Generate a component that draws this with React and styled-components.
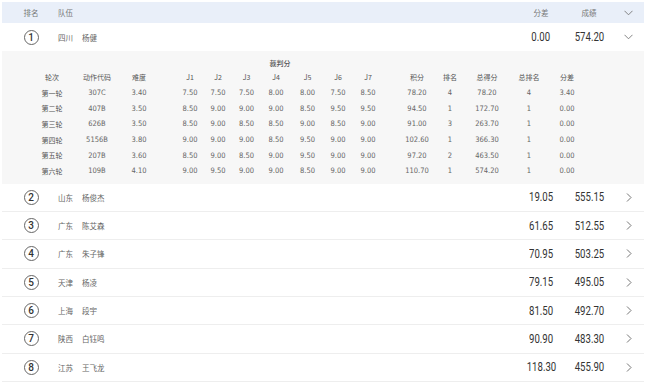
import React from "react";
import styled, { createGlobalStyle } from "styled-components";

const GlobalStyle = createGlobalStyle`
  body {
    margin: 0;
    background: #fff;
    font-family: "Noto Sans CJK SC", "Noto Sans", sans-serif;
  }
`;

const NUM_FONT = `Roboto, "DejaVu Sans Condensed", sans-serif`;

const athletes = [
  { rank: 1, prov: "四川", name: "杨健", diff: "0.00", score: "574.20", open: true },
  { rank: 2, prov: "山东", name: "杨俊杰", diff: "19.05", score: "555.15" },
  { rank: 3, prov: "广东", name: "陈艾森", diff: "61.65", score: "512.55" },
  { rank: 4, prov: "广东", name: "朱子锋", diff: "70.95", score: "503.25" },
  { rank: 5, prov: "天津", name: "杨凌", diff: "79.15", score: "495.05" },
  { rank: 6, prov: "上海", name: "段宇", diff: "81.50", score: "492.70" },
  { rank: 7, prov: "陕西", name: "白钰鸣", diff: "90.90", score: "483.30" },
  { rank: 8, prov: "江苏", name: "王飞龙", diff: "118.30", score: "455.90" },
];

const detailHead = ["轮次", "动作代码", "难度", "J1", "J2", "J3", "J4", "J5", "J6", "J7", "积分", "排名", "总得分", "总排名", "分差"];

const rounds = [
  ["第一轮", "307C", "3.40", "7.50", "7.50", "7.50", "8.00", "8.00", "7.50", "8.50", "78.20", "4", "78.20", "4", "3.40"],
  ["第二轮", "407B", "3.50", "8.50", "9.00", "9.00", "9.00", "8.50", "9.50", "9.50", "94.50", "1", "172.70", "1", "0.00"],
  ["第三轮", "626B", "3.50", "8.50", "9.00", "8.50", "8.50", "9.00", "8.50", "9.00", "91.00", "3", "263.70", "1", "0.00"],
  ["第四轮", "5156B", "3.80", "9.00", "9.00", "9.00", "8.50", "9.50", "9.00", "9.00", "102.60", "1", "366.30", "1", "0.00"],
  ["第五轮", "207B", "3.60", "8.50", "9.00", "8.50", "9.00", "9.50", "9.00", "9.00", "97.20", "2", "463.50", "1", "0.00"],
  ["第六轮", "109B", "4.10", "9.00", "9.50", "9.00", "9.00", "8.50", "9.00", "9.00", "110.70", "1", "574.20", "1", "0.00"],
];

const ChevronDown = () => (
  <svg width="9" height="6" viewBox="0 0 9 6">
    <polyline points="0.5,0.8 4.5,4.8 8.5,0.8" fill="none" stroke="#777" strokeWidth="0.9" />
  </svg>
);

const ChevronRight = () => (
  <svg width="6" height="9" viewBox="0 0 6 9">
    <polyline points="1,0.5 5,4.5 1,8.5" fill="none" stroke="#666" strokeWidth="0.9" />
  </svg>
);

const App = () => {
  return (
    <>
      <GlobalStyle />
      <Board>
        <Header>
          <RankCell>
            <HeadText>排名</HeadText>
          </RankCell>
          <NameCell>
            <HeadText>队伍</HeadText>
          </NameCell>
          <ValueCell>
            <HeadText>分差</HeadText>
          </ValueCell>
          <ValueCell>
            <HeadText>成绩</HeadText>
          </ValueCell>
          <ArrowCell>
            <ChevronDown />
          </ArrowCell>
        </Header>

        {athletes.map((a) => (
          <React.Fragment key={a.rank}>
            <Row $open={a.open}>
              <RankCell>
                <RankBadge>{a.rank}</RankBadge>
              </RankCell>
              <NameCell>
                <Team>{a.prov}</Team>
                <Team>{a.name}</Team>
              </NameCell>
              <ValueCell>
                <Score>{a.diff}</Score>
              </ValueCell>
              <ValueCell>
                <Score>{a.score}</Score>
              </ValueCell>
              <ArrowCell>{a.open ? <ChevronDown /> : <ChevronRight />}</ArrowCell>
            </Row>
            {a.open && (
              <Detail>
                <DetailGrid $h="12px">
                  <JudgeTitle>裁判分</JudgeTitle>
                </DetailGrid>
                <DetailGrid $h="16px">
                  {detailHead.map((h) => (
                    <Cell key={h}>{h}</Cell>
                  ))}
                </DetailGrid>
                {rounds.map((r) => (
                  <DetailGrid key={r[0]}>
                    {r.map((v, i) => (
                      <Cell key={i} $num={i > 0}>
                        {v}
                      </Cell>
                    ))}
                  </DetailGrid>
                ))}
              </Detail>
            )}
          </React.Fragment>
        ))}
      </Board>
    </>
  );
};

export default App;

const Board = styled.div`
  width: 642px;
  margin: 2px 0 0 2px;
`;

const Header = styled.div`
  display: flex;
  align-items: center;
  height: 21px;
  background: #e9eff9;
`;

const Row = styled.div`
  display: flex;
  align-items: center;
  height: ${(p) => (p.$open ? "28px" : "27.33px")};
  border-bottom: ${(p) => (p.$open ? "none" : "1px solid #eeeeee")};
  background: #fff;
`;

const RankCell = styled.div`
  width: 56px;
  padding-left: 2px;
  box-sizing: border-box;
  display: flex;
  justify-content: center;
`;

const NameCell = styled.div`
  flex: 1;
  display: flex;
  gap: 9px;
`;

const ValueCell = styled.div`
  width: 48px;
  display: flex;
  justify-content: center;
`;

const ArrowCell = styled.div`
  width: 31px;
  display: flex;
  justify-content: center;
  align-items: center;
`;

const HeadText = styled.span`
  font-size: 7.5px;
  color: #777;
`;

const RankBadge = styled.span`
  width: 13px;
  height: 13px;
  border: 1px solid #666;
  border-radius: 50%;
  display: flex;
  align-items: center;
  justify-content: center;
  font-family: ${NUM_FONT};
  font-size: 10px;
  font-weight: 500;
  color: #333;
`;

const Team = styled.span`
  font-size: 7.5px;
  color: #666;
`;

const Score = styled.span`
  display: inline-block;
  font-family: ${NUM_FONT};
  font-size: 12px;
  color: #333;
  transform: scaleX(0.8);
`;

const Detail = styled.div`
  background: #f7f7f7;
  padding: 6px 0 5px;
`;

const DetailGrid = styled.div`
  display: grid;
  grid-template-columns: 44px 46px 38px 18px 28px 28px 29px 30px 33px 28px 32px 14px 38px 28px 46px 38px 38px;
  padding-left: 28px;
  align-items: center;
  height: ${(p) => p.$h || "15.6px"};

  & > :nth-child(4) {
    grid-column-start: 5;
  }
  & > :nth-child(11) {
    grid-column-start: 13;
  }
`;

const JudgeTitle = styled.div`
  grid-column: 5 / 12;
  text-align: center;
  font-size: 7px;
  color: #555;
  font-weight: 500;
  line-height: 12px;
`;

const Cell = styled.div`
  text-align: center;
  white-space: nowrap;
  color: ${(p) => (p.$num ? "#666" : "#555")};
  font-family: ${(p) => (p.$num ? `"DejaVu Sans Condensed", sans-serif` : `"Noto Sans CJK SC", sans-serif`)};
  font-size: ${(p) => (p.$num ? "7.5px" : "7px")};
`;
